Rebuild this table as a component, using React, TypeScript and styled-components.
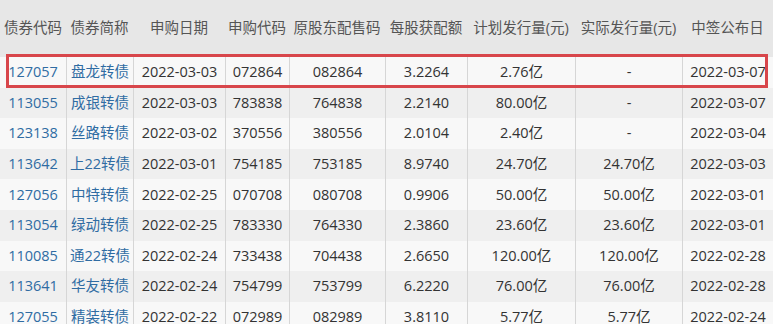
import React from 'react';
import styled, { createGlobalStyle } from 'styled-components';

const GlobalStyle = createGlobalStyle`
    html, body {
        margin: 0;
        padding: 0;
        background: #ffffff;
    }
    body {
        font-family: "Open Sans", "Noto Sans CJK SC", sans-serif;
        font-size: 14.5px;
    }
`

const columns = [66, 67, 92, 64, 96, 82, 108, 107, 91];
const gridCols = columns.map((w) => `${w}px`).join(' ');

const headers = ['债券代码', '债券简称', '申购日期', '申购代码', '原股东配售码', '每股获配额', '计划发行量(元)', '实际发行量(元)', '中签公布日'];

type Bond = [string, string, string, string, string, string, string, string, string];

const rows: Bond[] = [
    ['127057', '盘龙转债', '2022-03-03', '072864', '082864', '3.2264', '2.76亿', '-', '2022-03-07'],
    ['113055', '成银转债', '2022-03-03', '783838', '764838', '2.2140', '80.00亿', '-', '2022-03-07'],
    ['123138', '丝路转债', '2022-03-02', '370556', '380556', '2.0104', '2.40亿', '-', '2022-03-04'],
    ['113642', '上22转债', '2022-03-01', '754185', '753185', '8.9740', '24.70亿', '24.70亿', '2022-03-03'],
    ['127056', '中特转债', '2022-02-25', '070708', '080708', '0.9906', '50.00亿', '50.00亿', '2022-03-01'],
    ['113054', '绿动转债', '2022-02-25', '783330', '764330', '2.3860', '23.60亿', '23.60亿', '2022-03-01'],
    ['110085', '通22转债', '2022-02-24', '733438', '704438', '2.6650', '120.00亿', '120.00亿', '2022-02-28'],
    ['113641', '华友转债', '2022-02-24', '754799', '753799', '6.2220', '76.00亿', '76.00亿', '2022-02-28'],
    ['127055', '精装转债', '2022-02-22', '072989', '082989', '3.8110', '5.77亿', '5.77亿', '2022-02-24'],
];

const Wrapper = styled.div`
    position: relative;
    width: 773px;
    height: 324px;
    overflow: hidden;
    background: #ffffff;
`
const HeadRow = styled.div`
    display: grid;
    grid-template-columns: ${gridCols};
    height: 56px;
    padding-bottom: 1px;
    background: #e7e7e7;
    color: #555555;
    align-items: center;
`
const HeadCell = styled.div`
    text-align: center;
    white-space: nowrap;
    line-height: 20px;
    margin-top: -1px;
`
const Row = styled.div<{ $odd: boolean }>`
    display: grid;
    grid-template-columns: ${gridCols};
    height: 30.6px;
    background: ${(p) => (p.$odd ? '#efefef' : '#f8f8f8')};
`
const Cell = styled.div<{ $link?: boolean; $first?: boolean }>`
    display: flex;
    align-items: center;
    justify-content: center;
    white-space: nowrap;
    line-height: 20px;
    color: ${(p) => (p.$link ? '#2f6ca3' : '#333333')};
    border-left: ${(p) => (p.$first ? 'none' : '1px solid #d6d6d6')};
`
const Highlight = styled.div`
    position: absolute;
    left: 6px;
    top: 54px;
    width: 762px;
    height: 34px;
    box-sizing: border-box;
    border: 3px solid #d8464b;
    pointer-events: none;
`

export default function App() {
    return (
        <>
            <GlobalStyle />
            <Wrapper>
                <HeadRow>
                    {headers.map((h) => (
                        <HeadCell key={h}>{h}</HeadCell>
                    ))}
                </HeadRow>
                {rows.map((r, i) => (
                    <Row key={r[0]} $odd={i % 2 === 1}>
                        {r.map((v, j) => (
                            <Cell key={j} $link={j < 2} $first={j === 0}>{v}</Cell>
                        ))}
                    </Row>
                ))}
                <Highlight />
            </Wrapper>
        </>
    )
}
